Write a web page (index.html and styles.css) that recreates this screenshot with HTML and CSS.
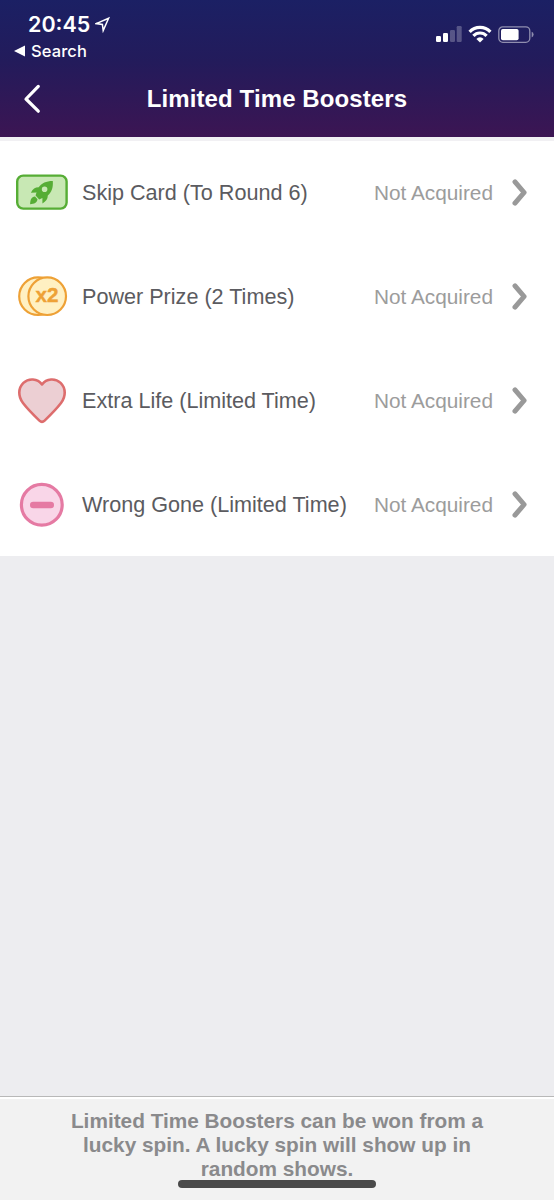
FILE: index.html
```html
<!DOCTYPE html>
<html lang="en">
<head>
  <meta charset="UTF-8">
  <meta name="viewport" content="width=device-width, initial-scale=1">
  <title>Limited Time Boosters</title>
  <link rel="stylesheet" href="styles.css">
</head>
<body>
  <header class="header">
    <div class="status">
      <div class="status-left">
        <div class="clock">
          <span>20:45</span>
          <svg width="16" height="18" viewBox="0 0 16 18"><path d="M1.2 8.6 L13.6 3.2 L8.2 15.6 L7.4 9.4 Z" fill="none" stroke="#fff" stroke-width="1.5" stroke-linejoin="miter"/></svg>
        </div>
        <div class="back-app">
          <svg width="12" height="12" viewBox="0 0 12 12"><path d="M0 6 L11 0.6 V11.4 Z" fill="#fff"/></svg>
          <span>Search</span>
        </div>
      </div>
      <div class="status-right">
        <svg width="26" height="17" viewBox="0 0 26 17" fill="#fff">
          <rect x="0" y="10" width="5" height="6" rx="1.2"/>
          <rect x="7" y="7" width="5" height="9" rx="1.2"/>
          <rect x="14" y="4" width="5" height="12" rx="1.2" opacity=".25"/>
          <rect x="20.7" y="0" width="5" height="16" rx="1.2" opacity=".25"/>
        </svg>
        <svg class="wifi" width="24" height="18" viewBox="0 0 24 18" fill="none" stroke="#fff" stroke-width="3.2">
          <path d="M1.6 6.8 A14.4 14.4 0 0 1 22.4 6.8"/>
          <path d="M5.4 10.9 A9 9 0 0 1 18.6 10.9"/>
          <path d="M12 17.6 L8.4 13.9 A4.9 4.9 0 0 1 15.6 13.9 Z" fill="#fff" stroke="none"/>
        </svg>
        <svg class="battery" width="36" height="18" viewBox="0 0 36 18">
          <rect x=".8" y=".9" width="31" height="15.4" rx="4" fill="none" stroke="#fff" stroke-opacity=".5" stroke-width="1.3"/>
          <rect x="3" y="3" width="17.6" height="11.2" rx="1.8" fill="#fff"/>
          <path d="M33.7 5.8 Q35.6 6.6 35.6 8.6 Q35.6 10.6 33.7 11.4 Z" fill="#fff" opacity=".5"/>
        </svg>
      </div>
    </div>
    <div class="nav">
      <svg class="nav-back" width="18" height="30" viewBox="0 0 18 30"><path d="M15.3 2.4 L3 15 L15.3 27.2" fill="none" stroke="#fff" stroke-width="3.2" stroke-linecap="round" stroke-linejoin="round"/></svg>
      <h1>Limited Time Boosters</h1>
    </div>
  </header>

  <main class="content">
    <ul class="boosters">
      <li class="booster">
        <svg class="icon" width="52" height="48" viewBox="0 0 52 48">
          <rect x="1.2" y="6.6" width="49.4" height="33" rx="6" fill="#c8e8b4" stroke="#56ad35" stroke-width="2.4"/>
          <path fill="#56ad35" fill-rule="evenodd" d="M36.8 12 C29.8 12 26 14.1 22.7 18.2 C19.1 18.2 16.7 19.9 14.9 23.8 L20.6 23.6 C20.1 24.6 19.8 25.7 19.6 26.6 L23.2 30.4 C24.3 30.1 25.3 29.7 26.4 29 V34.4 C30 32.5 31.8 30.3 31.8 26.6 C35.6 23 37.3 19 36.8 12 Z M28.6 17.4 A2.8 2.8 0 1 0 28.6 23 A2.8 2.8 0 1 0 28.6 17.4 Z"/>
          <path fill="#56ad35" d="M19 27.6 C15.3 28.1 14.3 30.6 14.1 35.2 C18.3 35.1 21 33.8 21.5 30.3 Z"/>
        </svg>
        <span class="name">Skip Card (To Round 6)</span>
        <span class="state">Not Acquired</span>
        <svg class="arrow" width="16" height="28" viewBox="0 0 16 28"><path d="M3 2.8 L12.1 13.5 L3 24.2"/></svg>
      </li>
      <li class="booster">
        <svg class="icon" width="52" height="48" viewBox="0 0 52 48" fill="#fff0c2" stroke="#eea136" stroke-width="2.2">
          <circle cx="22" cy="23.2" r="18.8"/>
          <circle cx="31.2" cy="23.2" r="18.8"/>
          <text class="coin-text" x="31" y="28.9" text-anchor="middle" textLength="23" lengthAdjust="spacingAndGlyphs">x2</text>
        </svg>
        <span class="name">Power Prize (2 Times)</span>
        <span class="state">Not Acquired</span>
        <svg class="arrow" width="16" height="28" viewBox="0 0 16 28"><path d="M3 2.8 L12.1 13.5 L3 24.2"/></svg>
      </li>
      <li class="booster">
        <svg class="icon" width="52" height="48" viewBox="0 0 52 48">
          <path d="M26 7.5 C30.5 1.2 39.5 1 44.6 5.9 C50 11.2 50 19.5 45 26 C40.5 32 34 38.4 28.6 43.6 Q26 46 23.4 43.6 C18 38.4 11.5 32 7 26 C2 19.5 2 11.2 7.4 5.9 C12.5 1 21.5 1.2 26 7.5 Z" fill="#eccfd3" stroke="#dd6d6d" stroke-width="2.6" stroke-linejoin="round"/>
        </svg>
        <span class="name">Extra Life (Limited Time)</span>
        <span class="state">Not Acquired</span>
        <svg class="arrow" width="16" height="28" viewBox="0 0 16 28"><path d="M3 2.8 L12.1 13.5 L3 24.2"/></svg>
      </li>
      <li class="booster">
        <svg class="icon" width="52" height="48" viewBox="0 0 52 48">
          <circle cx="25.8" cy="23.8" r="20.4" fill="#f9d6e8" stroke="#e57aa3" stroke-width="3.2"/>
          <rect x="14" y="20.8" width="24" height="6.4" rx="3.2" fill="#e57aa3"/>
        </svg>
        <span class="name">Wrong Gone (Limited Time)</span>
        <span class="state">Not Acquired</span>
        <svg class="arrow" width="16" height="28" viewBox="0 0 16 28"><path d="M3 2.8 L12.1 13.5 L3 24.2"/></svg>
      </li>
    </ul>
  </main>

  <footer class="footer">
    <p>Limited Time Boosters can be won from a lucky spin. A lucky spin will show up in random shows.</p>
    <div class="home-bar"></div>
  </footer>
</body>
</html>
```
FILE: styles.css
```css
* {
  box-sizing: border-box;
}
body {
  margin: 0;
  height: 1200px;
  display: flex;
  flex-direction: column;
  background: #ededf0;
  font-family: "Liberation Sans", Arial, sans-serif;
}
svg {
  display: block;
  flex: none;
}
.header {
  height: 137px;
  flex: none;
  color: #fff;
  background: linear-gradient(#1b2064, #231b5b 45%, #3c1553);
}

/* Status bar */
.status {
  height: 66px;
  display: flex;
  justify-content: space-between;
  padding: 10px 20px 0 14px;
  font-family: Inter, sans-serif;
}
.clock {
  display: flex;
  align-items: center;
  gap: 5px;
  height: 27px;
  padding-left: 14px;
  font-size: 21.5px;
  font-weight: 600;
}
.back-app {
  display: flex;
  align-items: center;
  gap: 5px;
  height: 27px;
  font-size: 16.5px;
  font-weight: 500;
  letter-spacing: 0.1px;
}
.status-right {
  display: flex;
  align-items: flex-start;
  padding-top: 16px;
}
.wifi {
  margin: -1px 0 0 6px;
}
.battery {
  margin-left: 6px;
}

/* Title bar */
.nav {
  height: 66px;
  display: grid;
  grid-template-columns: 60px 1fr 60px;
  align-items: center;
}
.nav-back {
  margin-left: 23px;
}
.nav h1 {
  margin: 0;
  font-size: 24px;
  line-height: 28px;
  letter-spacing: 0.1px;
  text-align: center;
  white-space: nowrap;
}

/* Booster list */
.content {
  flex: 1;
  border-top: 4px solid #f1f0f3;
}
.boosters {
  height: 415px;
  margin: 0;
  padding: 0;
  list-style: none;
  background: #fff;
}
.booster {
  height: 104px;
  display: flex;
  align-items: center;
  padding: 0 26px 0 16px;
}
.name {
  flex: 1;
  margin-left: 14px;
  font-size: 21.6px;
  line-height: 24px;
  color: #5b5b60;
  white-space: nowrap;
}
.state {
  margin-right: 19px;
  font-size: 20.8px;
  line-height: 24px;
  color: #9c9c9c;
}
.arrow {
  fill: none;
  stroke: #999;
  stroke-width: 5;
  stroke-linecap: round;
  stroke-linejoin: round;
}
.coin-text {
  font-size: 19.5px;
  font-weight: bold;
  fill: #eea136;
  stroke-width: 0.4;
}

/* Bottom note */
.footer {
  height: 104px;
  flex: none;
  display: flex;
  flex-direction: column;
  align-items: center;
  background: #f2f2f2;
  border-top: 1px solid #b8b8b8;
  box-shadow: inset 0 2px #fff;
}
.footer p {
  width: 430px;
  margin: 12px 0 0;
  font-size: 20.8px;
  font-weight: bold;
  line-height: 24px;
  text-align: center;
  color: #8a8a8c;
}
.home-bar {
  width: 198px;
  height: 8px;
  margin-top: -1px;
  border-radius: 4px;
  background: #4a4a4a;
}
```
